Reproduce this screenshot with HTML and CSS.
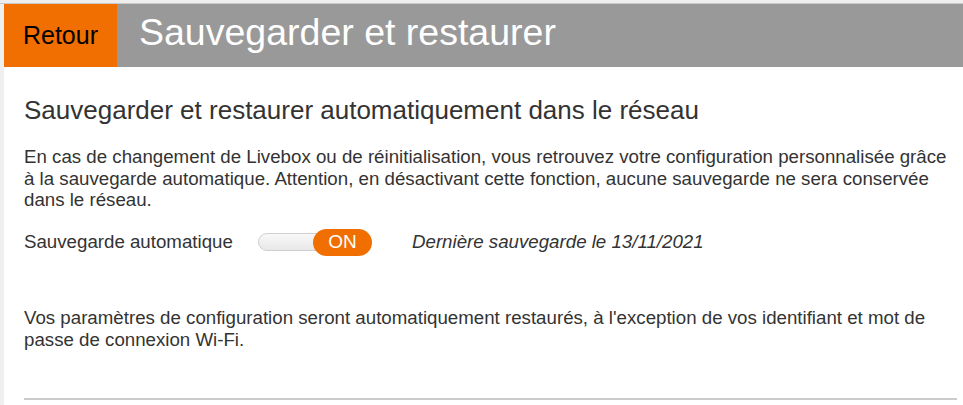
FILE: index.html
```html
<!DOCTYPE html>
<html lang="fr">
<head>
<meta charset="utf-8">
<link rel="stylesheet" href="styles.css">
</head>
<body>
<div class="topbar"></div>
<div class="page">
  <header class="header">
    <div class="back">Retour</div>
    <h1 class="title">Sauvegarder et restaurer</h1>
  </header>
  <main class="content">
    <h2 class="section-title">Sauvegarder et restaurer automatiquement dans le réseau</h2>
    <p class="text">En cas de changement de Livebox ou de réinitialisation, vous retrouvez votre configuration personnalisée grâce à la sauvegarde automatique. Attention, en désactivant cette fonction, aucune sauvegarde ne sera conservée dans le réseau.</p>
    <div class="row">
      <span class="label">Sauvegarde automatique</span>
      <div class="toggle">
        <span class="track"></span>
        <span class="knob">ON</span>
      </div>
      <span class="last">Dernière sauvegarde le 13/11/2021</span>
    </div>
    <p class="text note">Vos paramètres de configuration seront automatiquement restaurés, à l'exception de vos identifiant et mot de passe de connexion Wi-Fi.</p>
    <hr class="sep">
  </main>
</div>
</body>
</html>
```
FILE: styles.css
```css
html, body {
  margin: 0;
  padding: 0;
}
body {
  background: #efefef;
  font-family: "Liberation Sans", Arial, sans-serif;
  color: #333;
  width: 963px;
  height: 405px;
  overflow: hidden;
}
.topbar {
  height: 3px;
  background: #eeeeee;
  border-bottom: 1px solid #c8c8c8;
}
.page {
  margin-left: 4px;
  background: #fff;
  min-height: 401px;
}
.header {
  display: flex;
  height: 63px;
  background: #999999;
}
.back {
  width: 113px;
  background: #f16e00;
  color: #000;
  font-size: 25px;
  display: flex;
  align-items: center;
  justify-content: center;
}
.title {
  margin: 0;
  padding-left: 22px;
  font-weight: normal;
  font-size: 37.5px;
  color: #fff;
  display: flex;
  align-items: center;
  padding-bottom: 6px;
}
.content {
  padding: 0 6px 0 20px;
}
.section-title {
  margin: 0;
  padding-top: 28px;
  font-weight: normal;
  font-size: 26px;
  line-height: 30px;
  color: #333;
}
.text {
  margin: 21px 0 0;
  font-size: 18.7px;
  line-height: 21.5px;
}
.row {
  display: flex;
  align-items: center;
  margin-top: 17.5px;
  font-size: 18.7px;
  height: 28px;
}
.label {
  width: 234px;
}
.toggle {
  position: relative;
  width: 114px;
  height: 27px;
  display: flex;
  align-items: center;
}
.track {
  width: 66px;
  height: 16px;
  border: 1px solid #d0d0d0;
  border-radius: 9px;
  background: linear-gradient(#f8f8f8, #e8e8e8);
}
.knob {
  position: absolute;
  right: 0;
  top: 0;
  width: 59px;
  height: 27px;
  border-radius: 14px;
  background: #f16e00;
  color: #fff;
  font-size: 19px;
  display: flex;
  align-items: center;
  justify-content: center;
}
.last {
  margin-left: 40px;
  font-style: italic;
}
.note {
  margin-top: 51px;
}
.sep {
  margin: 48px 0 0;
  border: 0;
  border-top: 2px solid #cccccc;
}
```
